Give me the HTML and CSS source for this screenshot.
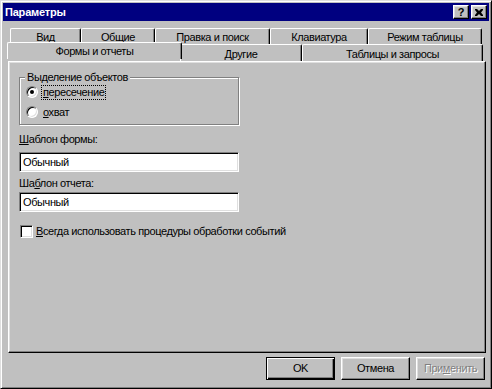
FILE: index.html
```html
<!DOCTYPE html>
<html lang="ru">
<head>
    <meta charset="UTF-8">
    <title>Параметры</title>
    <link rel="stylesheet" href="styles.css">
</head>
<body>
    <div class="window">
        <div class="titlebar">
            <span class="title">Параметры</span>
            <div class="caption-buttons">
                <div class="cap-btn help">?</div>
                <div class="cap-btn close">
                    <svg width="8" height="7" viewBox="0 0 8 7"><path d="M0 0h2l2 2 2-2h2v1L6 3.5 8 6v1H6L4 5 2 7H0V6l2-2.5L0 1z" fill="#000"/></svg>
                </div>
            </div>
        </div>

        <div class="dialog-body">
            <div class="tab-row back">
                <div class="tab t-vid">Вид</div>
                <div class="tab t-common">Общие</div>
                <div class="tab t-edit">Правка и поиск</div>
                <div class="tab t-keys">Клавиатура</div>
                <div class="tab t-table">Режим таблицы</div>
            </div>
            <div class="tab-row front">
                <div class="tab t-forms selected">Формы и отчеты</div>
                <div class="tab t-other">Другие</div>
                <div class="tab t-queries">Таблицы и запросы</div>
            </div>

            <div class="panel">
                <fieldset class="group">
                    <legend>Выделение объектов</legend>
                    <div class="radio-row">
                        <span class="radio checked"></span>
                        <span class="focus"><u>п</u>ересечение</span>
                    </div>
                    <div class="radio-row second">
                        <span class="radio"></span>
                        <span class="radio-text"><u>о</u>хват</span>
                    </div>
                </fieldset>

                <div class="field-label first"><u>Ш</u>аблон формы:</div>
                <div class="textbox">Обычный</div>
                <div class="field-label second">Ша<u>б</u>лон отчета:</div>
                <div class="textbox second">Обычный</div>

                <div class="check-row">
                    <span class="checkbox"></span>
                    <span><u>В</u>сегда использовать процедуры обработки событий</span>
                </div>
            </div>

            <div class="buttons">
                <div class="btn default">OK</div>
                <div class="btn">Отмена</div>
                <div class="btn disabled">При<u>м</u>енить</div>
            </div>
        </div>
    </div>
</body>
</html>
```

FILE: styles.css
```css
* { box-sizing: border-box; }
body { margin: 0; font-family: "Liberation Sans", Arial, sans-serif; font-size: 11px; line-height: 13px; letter-spacing: -0.4px; color: #000; background: #c0c0c0; }
u { text-decoration: underline; text-underline-offset: 1px; }

.window { width: 492px; height: 389px; background: #c0c0c0; padding: 2px; border: 1px solid; border-color: #dfdfdf #000 #000 #dfdfdf; box-shadow: inset 1px 1px #fff, inset -1px -1px #808080; }

.titlebar { height: 18px; background: #000080; color: #fff; display: flex; align-items: center; justify-content: space-between; padding: 0 2px 0 2px; }
.title { font-weight: bold; font-size: 11px; letter-spacing: -0.2px; }
.caption-buttons { display: flex; gap: 2px; }
.cap-btn { width: 16px; height: 14px; background: #c0c0c0; color: #000; display: flex; align-items: center; justify-content: center; font-weight: bold; font-size: 11px; border: 1px solid; border-color: #fff #000 #000 #fff; box-shadow: inset -1px -1px #808080, inset 1px 1px #dfdfdf; }

.dialog-body { padding: 7px 3px 0 5px; }

.tab-row { display: flex; align-items: flex-start; }
.tab-row.back { margin-left: 2px; width: 472px; height: 16px; }
.tab-row.front { margin-left: 1px; width: 474px; height: 17px; }
.tab { height: 16px; padding-top: 2px; display: flex; align-items: center; justify-content: center; background: #c0c0c0; border-top: 1px solid #fff; border-left: 1px solid #fff; border-right: 1px solid #000; box-shadow: inset -1px 0 #808080; border-radius: 2px 2px 0 0; }
.tab-row.front .tab { height: 17px; }
.tab.selected { position: relative; z-index: 1; height: 20px; margin: -2px -2px -1px; padding-top: 1px; }

.t-vid { width: 71px; }
.t-common { width: 74px; }
.t-edit { width: 115px; }
.t-keys { width: 98px; }
.t-table { width: 114px; }
.t-forms { width: 175px; }
.t-other { width: 122px; }
.t-queries { width: 181px; }

.panel { height: 292px; padding: 9px 0 0 10px; border: 1px solid; border-color: #fff #000 #000 #fff; box-shadow: inset -1px -1px #808080, inset 1px 1px #dfdfdf; }

.group { width: 220px; margin: 0; padding: 0 0 4px 0; border: 1px solid #808080; box-shadow: inset 1px 1px #fff, 1px 1px #fff; }
.group legend { margin-left: 5px; padding: 0 2px; background: #c0c0c0; line-height: 13px; }
.radio-row { height: 16px; display: flex; align-items: center; gap: 4px; padding-left: 6px; }
.radio-row.second { margin-top: 4px; }
.radio { position: relative; width: 12px; height: 12px; border-radius: 50%; background: #fff; border: 1px solid; border-color: #808080 #fff #fff #808080; box-shadow: inset 1px 1px #000, inset -1px -1px #dfdfdf; }
.radio.checked::after { content: ""; position: absolute; left: 3px; top: 3px; width: 4px; height: 4px; border-radius: 50%; background: #000; }
.focus { outline: 1px dotted #000; outline-offset: 0; padding: 0 1px; }
.radio-text { padding-left: 1px; }

.field-label.first { margin-top: 8px; }
.field-label.second { margin-top: 5px; }
.textbox { width: 220px; height: 20px; margin-top: 6px; padding-left: 3px; display: flex; align-items: center; background: #fff; border: 1px solid; border-color: #808080 #fff #fff #808080; box-shadow: inset 1px 1px #000, inset -1px -1px #dfdfdf; }
.textbox.second { margin-top: 2px; }

.check-row { margin-top: 13px; display: flex; align-items: center; gap: 3px; padding-left: 1px; }
.checkbox { width: 13px; height: 13px; background: #fff; border: 1px solid; border-color: #808080 #fff #fff #808080; box-shadow: inset 1px 1px #000, inset -1px -1px #dfdfdf; }

.buttons { display: flex; justify-content: flex-end; gap: 6px; margin-top: 4px; padding-right: 1px; }
.btn { width: 69px; height: 23px; display: flex; align-items: center; justify-content: center; border: 1px solid; border-color: #fff #000 #000 #fff; box-shadow: inset -1px -1px #808080, inset 1px 1px #dfdfdf; }
.btn.default { border-color: #000; box-shadow: inset 1px 1px #fff, inset -1px -1px #000, inset -2px -2px #808080; }
.btn.disabled { color: #808080; text-shadow: 1px 1px #fff; }
```
